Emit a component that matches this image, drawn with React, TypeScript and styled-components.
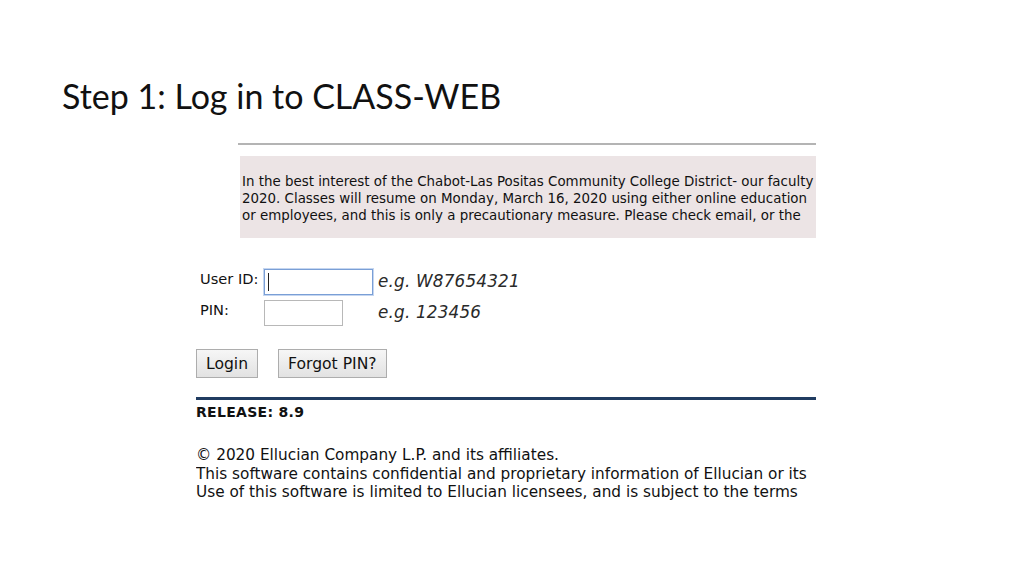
import React from "react";
import styled, { createGlobalStyle } from "styled-components";

const Global = createGlobalStyle`
    html, body {
        margin: 0;
        padding: 0;
        background: #ffffff;
    }
    body {
        width: 1024px;
        height: 575px;
        overflow: hidden;
    }
`;

const Slide = styled.div`
    width: 1024px;
    height: 575px;
    background: #ffffff;
    display: flex;
    flex-direction: column;
`;

const Title = styled.h1`
    margin: 73px 0 0 62px;
    font-family: Lato, "Open Sans", sans-serif;
    font-weight: 400;
    font-size: 34px;
    line-height: 46px;
    color: #111111;
`;

const Shot = styled.div`
    margin: 24px 0 0 196px;
    width: 620px;
    overflow: hidden;
    font-family: "DejaVu Sans", Verdana, sans-serif;
    color: #111111;
    white-space: nowrap;
`;

const TopRule = styled.div`
    margin-left: 42px;
    height: 2px;
    background: #b4b4b4;
`;

const Notice = styled.div`
    margin: 11px 0 0 44px;
    padding: 17px 0 14px 2px;
    background: #ece4e5;
    font-size: 13.4px;
    line-height: 17px;
`;

const Form = styled.div`
    margin: 31px 0 0 4px;
    display: grid;
    grid-template-columns: 64px 114px auto;
    row-gap: 5px;
    align-items: start;
`;

const Label = styled.div`
    font-size: 14.6px;
    line-height: 18px;
    padding-top: 1px;
`;

const Input = styled.div<{ $w: number; $focus?: boolean }>`
    width: ${p => p.$w}px;
    height: 26px;
    box-sizing: border-box;
    border: 1px solid ${p => (p.$focus ? "#7a9fd6" : "#b8b8b8")};
    box-shadow: ${p => (p.$focus ? "0 0 0 1px #c5d6f0" : "none")};
    background: #ffffff;
    padding: 3px 0 0 3px;
`;

const Caret = styled.div`
    width: 1px;
    height: 18px;
    background: #222222;
`;

const Hint = styled.div`
    font-size: 16.8px;
    font-style: italic;
    line-height: 24px;
    color: #2a2a2a;
    letter-spacing: 0.2px;
`;

const Buttons = styled.div`
    margin-top: 23px;
    display: flex;
    gap: 20px;
`;

const Button = styled.div`
    height: 29px;
    box-sizing: border-box;
    padding: 0 9px;
    display: flex;
    align-items: center;
    border: 1px solid #adadad;
    background: linear-gradient(#f6f6f6, #e2e2e2);
    font-size: 15.6px;
    color: #111111;
`;

const ReleaseRule = styled.div`
    margin-top: 19px;
    height: 3px;
    background: #203c61;
`;

const Release = styled.div`
    margin-top: 3px;
    font-size: 14px;
    font-weight: bold;
    line-height: 18px;
    letter-spacing: 0.3px;
`;

const Footer = styled.div`
    margin-top: 25px;
    font-size: 15.3px;
    line-height: 18.5px;
`;

export default function App() {
    return (
        <Slide>
            <Global />
            <Title>Step 1: Log in to CLASS-WEB</Title>
            <Shot>
                <TopRule />
                <Notice>
                    <div>In the best interest of the Chabot-Las Positas Community College District- our faculty</div>
                    <div>2020. Classes will resume on Monday, March 16, 2020 using either online education</div>
                    <div>or employees, and this is only a precautionary measure. Please check email, or the</div>
                </Notice>
                <Form>
                    <Label>User ID:</Label>
                    <Input $w={109} $focus><Caret /></Input>
                    <Hint>e.g. W87654321</Hint>
                    <Label>PIN:</Label>
                    <Input $w={79} />
                    <Hint>e.g. 123456</Hint>
                </Form>
                <Buttons>
                    <Button>Login</Button>
                    <Button>Forgot PIN?</Button>
                </Buttons>
                <ReleaseRule />
                <Release>RELEASE: 8.9</Release>
                <Footer>
                    <div>© 2020 Ellucian Company L.P. and its affiliates.</div>
                    <div>This software contains confidential and proprietary information of Ellucian or its</div>
                    <div>Use of this software is limited to Ellucian licensees, and is subject to the terms</div>
                </Footer>
            </Shot>
        </Slide>
    );
}
